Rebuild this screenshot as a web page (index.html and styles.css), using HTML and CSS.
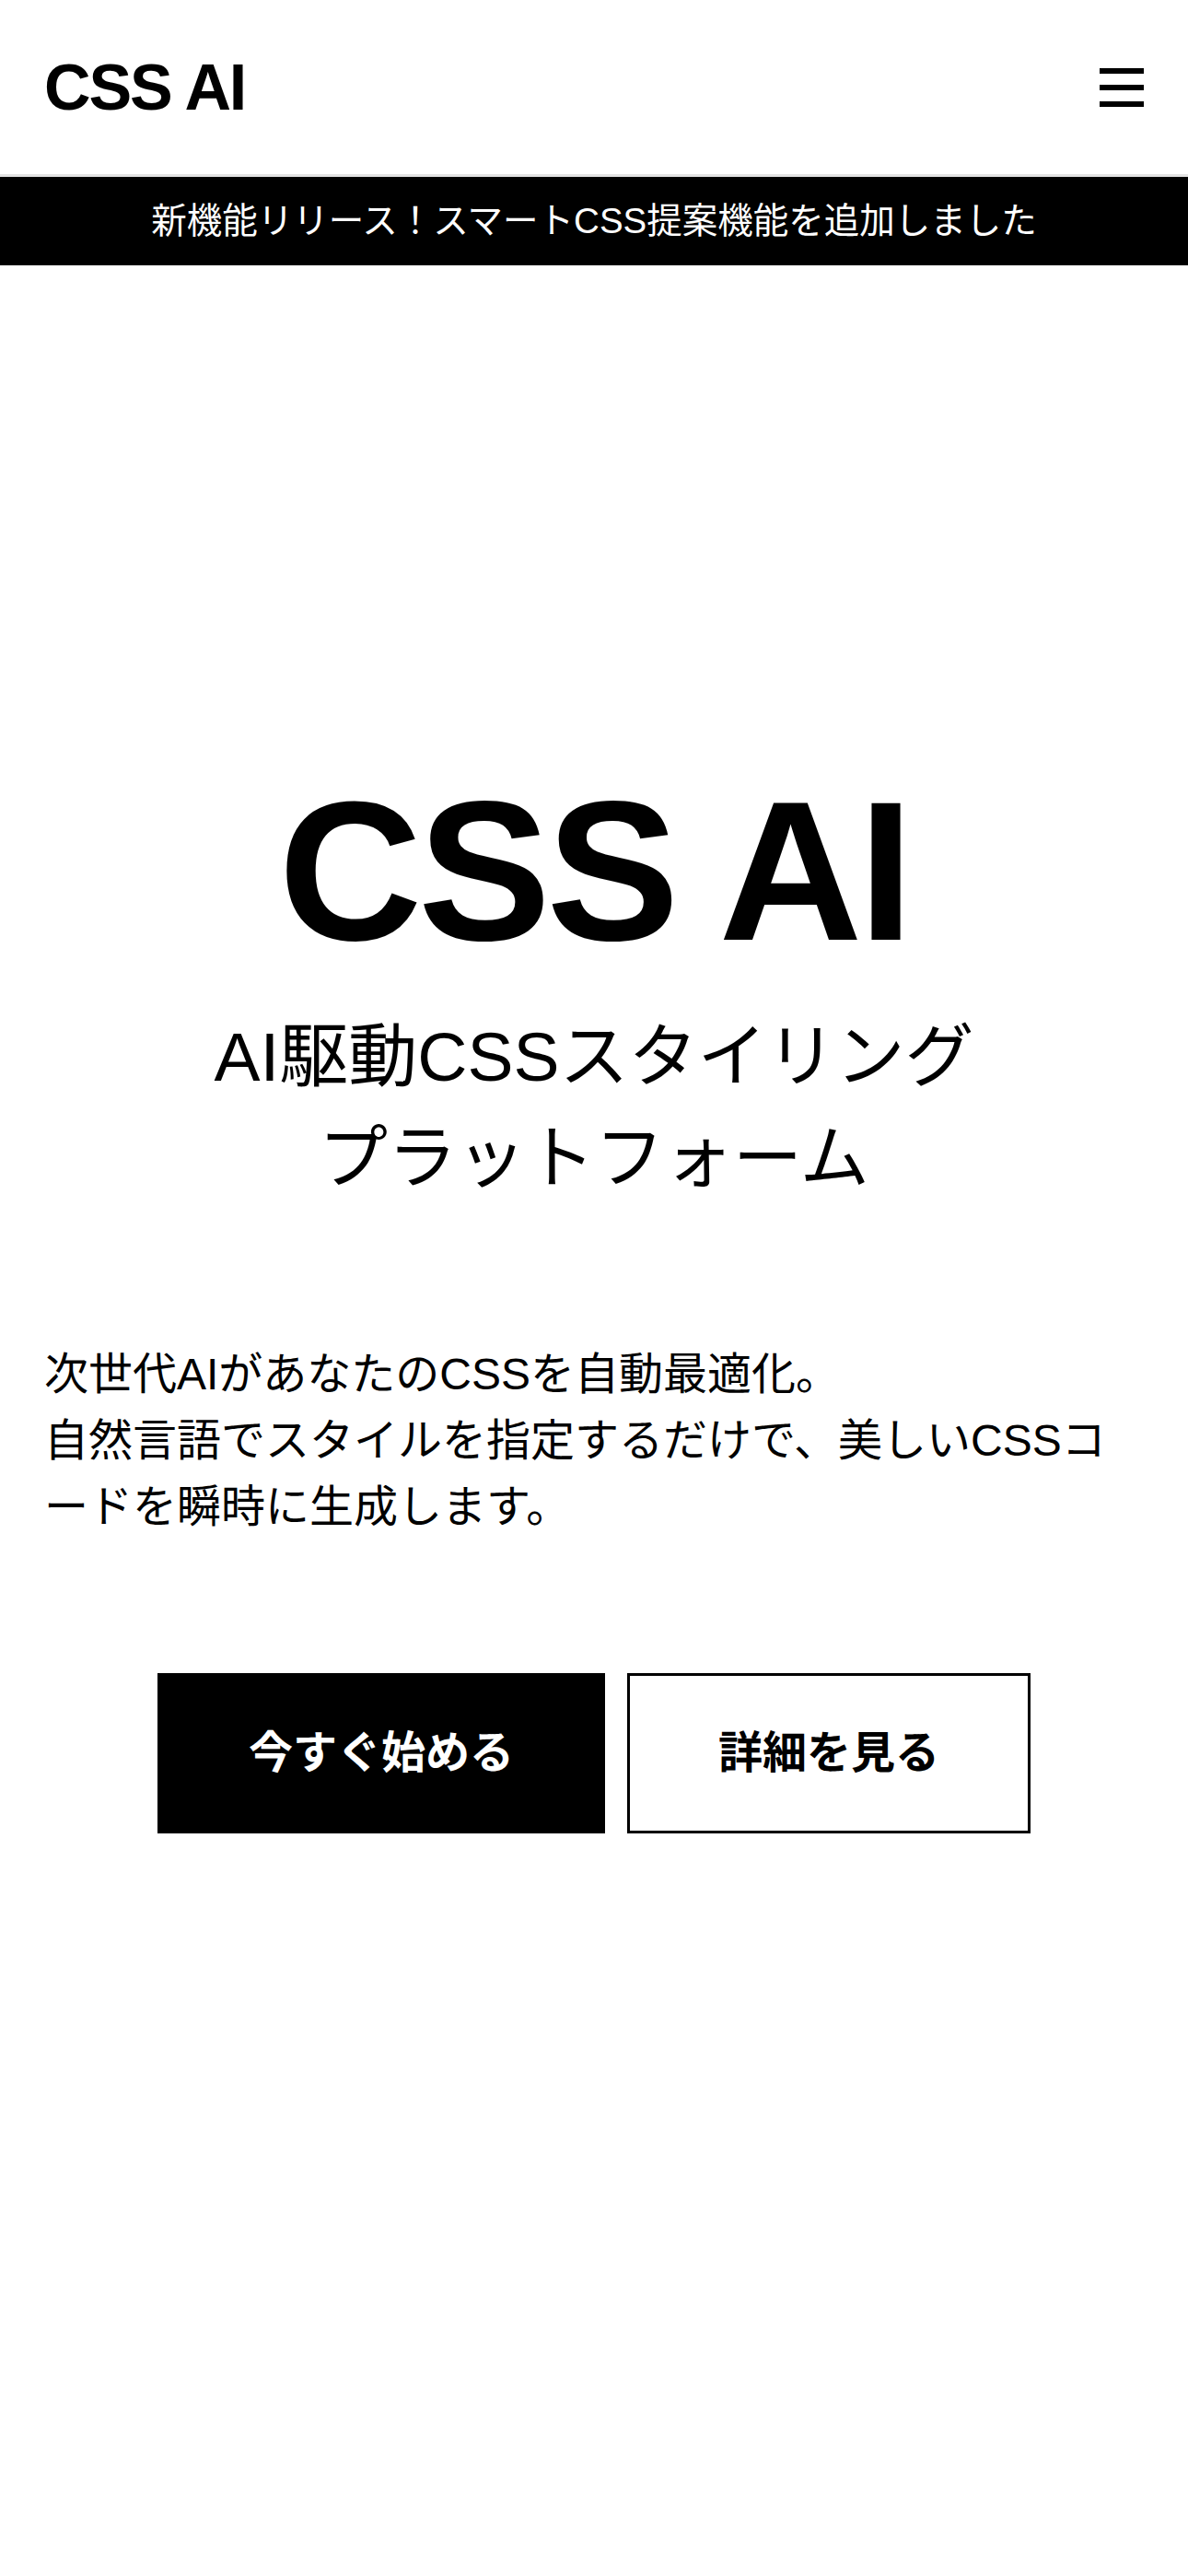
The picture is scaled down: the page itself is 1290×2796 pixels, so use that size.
FILE: index.html
```html
<!DOCTYPE html>
<html lang="ja">
<head>
<meta charset="utf-8">
<title>CSS AI</title>
<link rel="stylesheet" href="styles.css">
</head>
<body>
<div class="topbar">
  <header class="site-header">
    <div class="logo">CSS AI</div>
    <button class="menu-btn" aria-label="メニュー">
      <span class="bar"></span><span class="bar"></span><span class="bar"></span>
    </button>
  </header>
  <div class="announce">新機能リリース！スマートCSS提案機能を追加しました</div>
</div>
<main class="hero">
  <h1 class="hero-title">CSS AI</h1>
  <p class="hero-sub">AI駆動CSSスタイリング<br>プラットフォーム</p>
  <p class="hero-desc">次世代AIがあなたのCSSを自動最適化。<br>自然言語でスタイルを指定するだけで、美しいCSSコードを瞬時に生成します。</p>
  <div class="actions">
    <a class="btn btn-primary" href="#">今すぐ始める</a>
    <a class="btn btn-outline" href="#">詳細を見る</a>
  </div>
</main>
</body>
</html>
```

FILE: styles.css
```css
* {
  box-sizing: border-box;
}

html, body {
  margin: 0;
  padding: 0;
  background: #fff;
  color: #000;
  font-family: "Liberation Sans", "Noto Sans CJK JP", sans-serif;
}

.topbar {
  position: fixed;
  top: 0;
  left: 0;
  right: 0;
  z-index: 10;
}

.site-header {
  height: 192px;
  display: flex;
  align-items: center;
  justify-content: space-between;
  padding: 0 48px;
  background: #fff;
  border-bottom: 3px solid #e3e3e3;
}

.logo {
  font-size: 70px;
  font-weight: 700;
  line-height: 1;
  letter-spacing: -0.03em;
}

.menu-btn {
  display: flex;
  flex-direction: column;
  gap: 12px;
  width: 48px;
  padding: 0;
  margin: 0;
  border: 0;
  background: transparent;
}

.bar {
  display: block;
  width: 48px;
  height: 6px;
  background: #000;
}

.announce {
  height: 96px;
  display: flex;
  align-items: center;
  justify-content: center;
  background: #000;
  color: #fff;
  font-size: 38.5px;
  line-height: 1;
}

.hero {
  min-height: 100vh;
  padding: 10px 48px 0;
  display: flex;
  flex-direction: column;
  align-items: center;
  justify-content: center;
}

.hero-title {
  margin: 0 0 17px;
  font-size: 216px;
  font-weight: 700;
  line-height: 1.2;
  letter-spacing: -0.021em;
  text-align: center;
}

.hero-sub {
  margin: 0 0 144px;
  font-size: 75px;
  font-weight: 400;
  line-height: 110px;
  text-align: center;
}

.hero-desc {
  align-self: stretch;
  margin: 0 0 144px;
  font-size: 48px;
  line-height: 1.5;
  text-align: left;
}

.actions {
  display: flex;
  gap: 24px;
  justify-content: center;
}

.btn {
  display: block;
  padding: 48px 96px;
  border: 3px solid #000;
  font-size: 48px;
  font-weight: 700;
  line-height: 1.5;
  text-decoration: none;
}

.btn-primary {
  background: #000;
  color: #fff;
}

.btn-outline {
  background: #fff;
  color: #000;
}
```
